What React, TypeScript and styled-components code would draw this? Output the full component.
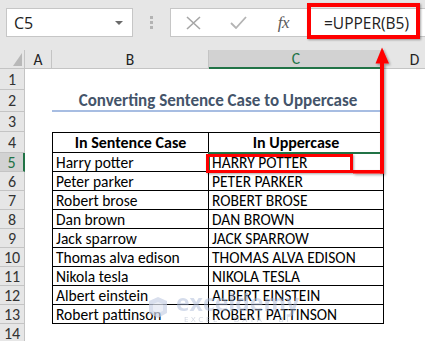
import styled, { createGlobalStyle } from 'styled-components';

const rows = [
  ['Harry potter', 'HARRY POTTER'],
  ['Peter parker', 'PETER PARKER'],
  ['Robert brose', 'ROBERT BROSE'],
  ['Dan brown', 'DAN BROWN'],
  ['Jack sparrow', 'JACK SPARROW'],
  ['Thomas alva edison', 'THOMAS ALVA EDISON'],
  ['Nikola tesla', 'NIKOLA TESLA'],
  ['Albert einstein', 'ALBERT EINSTEIN'],
  ['Robert pattinson', 'ROBERT PATTINSON'],
];

const columns = ['A', 'B', 'C', 'D'];

function App() {
  return (
    <StPage>
      <GlobalStyle />
      <StToolbar>
        <StNameBox>
          <span>C5</span>
          <StDropdown />
        </StNameBox>
        <StDots>
          <i />
          <i />
          <i />
        </StDots>
        <StFormulaBox>
          <StIconSlot>
            <svg width="15" height="14" viewBox="0 0 15 14">
              <path d="M1 1 L14 13 M14 1 L1 13" stroke="#a6a6a6" strokeWidth="1.6" fill="none" />
            </svg>
          </StIconSlot>
          <StIconSlot>
            <svg width="17" height="13" viewBox="0 0 17 13">
              <path d="M1 7 L6 12 L16 1" stroke="#b4b4b4" strokeWidth="1.8" fill="none" />
            </svg>
          </StIconSlot>
          <StIconSlot>
            <StFx>fx</StFx>
          </StIconSlot>
          <StFormula>=UPPER(B5)</StFormula>
        </StFormulaBox>
      </StToolbar>

      <StSheet>
        <StCorner />
        {columns.map((c) => (
          <StColHeader key={c} $selected={c === 'C'}>
            {c}
          </StColHeader>
        ))}

        <StRowHeader>1</StRowHeader>
        <StCell />
        <StCell />
        <StCell />
        <StCell />

        <StRowHeader>2</StRowHeader>
        <StCell />
        <StTitle>Converting Sentence Case to Uppercase</StTitle>
        <StCell />

        <StRowHeader>3</StRowHeader>
        <StCell />
        <StCell />
        <StCell />
        <StCell />

        <StRowHeader>4</StRowHeader>
        <StCell />
        <StTableCell $head $first $top>
          In Sentence Case
        </StTableCell>
        <StTableCell $head $top>
          In Uppercase
        </StTableCell>
        <StCell />

        {rows.map(([a, b], i) => (
          <StRowGroup key={a} row={i + 5} a={a} b={b} />
        ))}

        <StRowHeader>14</StRowHeader>
        <StCell />
        <StCell />
        <StCell />
        <StCell />
      </StSheet>

      <StWatermark>
        <svg width="22" height="22" viewBox="0 0 22 22">
          <path d="M2 4 L11 0 L20 4 L20 16 L11 21 L2 16 Z" fill="#c9d2e6" />
          <path d="M6 7 L11 5 L16 7 L16 14 L11 16 L6 14 Z" fill="#e3e8f3" />
        </svg>
        <div>
          <StMarkName>exceldemy</StMarkName>
          <StMarkSub>EXCEL · DATA · BI</StMarkSub>
        </div>
      </StWatermark>

      <StFormulaHighlight />
      <StCellHighlight />
      <StArrow width="425" height="341" viewBox="0 0 425 341">
        <defs>
          <filter id="sh" x="-20%" y="-20%" width="160%" height="160%">
            <feDropShadow dx="1.5" dy="1.5" stdDeviation="1" floodColor="#000" floodOpacity="0.35" />
          </filter>
        </defs>
        <g filter="url(#sh)" fill="#ff0000">
          <rect x="353" y="170" width="31" height="3.5" />
          <rect x="380" y="62" width="4" height="111.5" />
          <path d="M375.5 63.5 L389 63.5 L382 47.5 Z" />
        </g>
      </StArrow>
    </StPage>
  );
}

function StRowGroup({ row, a, b }: { row: number; a: string; b: string }) {
  return (
    <>
      <StRowHeader $selected={row === 5}>{row}</StRowHeader>
      <StCell />
      <StTableCell $first>{a}</StTableCell>
      <StTableCell $active={row === 5}>{b}</StTableCell>
      <StCell />
    </>
  );
}

export default App;

const GlobalStyle = createGlobalStyle`
  html, body {
    margin: 0;
    padding: 0;
    background: #ffffff;
  }
  body {
    font-family: Carlito, Lato, "Liberation Sans", sans-serif;
    overflow: hidden;
  }
`;

const StPage = styled.div`
  position: relative;
  width: 425px;
  height: 341px;
  overflow: hidden;
  background: #ffffff;
`;

const StToolbar = styled.div`
  display: flex;
  align-items: flex-start;
  height: 50px;
  box-sizing: border-box;
  padding: 8px 0 0 6px;
  background: #e6e6e6;
`;

const StNameBox = styled.div`
  display: flex;
  align-items: center;
  justify-content: space-between;
  width: 127px;
  height: 29px;
  box-sizing: border-box;
  padding: 0 9px 0 7px;
  background: #ffffff;
  border: 1px solid #c6c6c6;
  font-family: 'Open Sans', sans-serif;
  font-size: 16px;
  color: #222222;
`;

const StDropdown = styled.div`
  width: 0;
  height: 0;
  border-left: 4px solid transparent;
  border-right: 4px solid transparent;
  border-top: 4px solid #6a6a6a;
`;

const StDots = styled.div`
  display: flex;
  flex-direction: column;
  align-items: center;
  gap: 2px;
  width: 37px;
  padding-top: 8px;

  i {
    display: block;
    width: 3px;
    height: 3px;
    background: #b3b3b3;
  }
`;

const StFormulaBox = styled.div`
  display: flex;
  align-items: center;
  flex: 1;
  height: 29px;
  box-sizing: border-box;
  background: #ffffff;
  border: 1px solid #c6c6c6;
  border-right: none;
`;

const StIconSlot = styled.div`
  display: flex;
  align-items: center;
  justify-content: center;
  width: 45px;
  height: 100%;
`;

const StFx = styled.span`
  font-family: 'Liberation Serif', serif;
  font-style: italic;
  font-size: 17px;
  color: #5a5a5a;
  letter-spacing: -0.5px;
`;

const StFormula = styled.div`
  padding-left: 18px;
  font-family: 'Open Sans', sans-serif;
  font-size: 15.5px;
  color: #222222;
  white-space: nowrap;
`;

const StSheet = styled.div`
  display: grid;
  grid-template-columns: 25px 27px 157px 175px 62px;
  grid-template-rows: 19px 21px 22px 20px 21px repeat(10, 19px);
  font-size: 15.5px;
`;

const StCorner = styled.div`
  position: relative;
  background: #e6e6e6;
  border-right: 1px solid #c4c4c4;
  border-bottom: 1px solid #c4c4c4;
  box-sizing: border-box;

  &::after {
    content: '';
    position: absolute;
    right: 2px;
    bottom: 2px;
    width: 0;
    height: 0;
    border-left: 9px solid transparent;
    border-bottom: 13px solid #b8b8b8;
  }
`;

const StColHeader = styled.div<{ $selected?: boolean }>`
  display: flex;
  align-items: center;
  justify-content: center;
  box-sizing: border-box;
  background: ${(p) => (p.$selected ? '#d2d2d2' : '#e6e6e6')};
  color: ${(p) => (p.$selected ? '#217346' : '#222222')};
  border-right: 1px solid #c4c4c4;
  border-bottom: ${(p) => (p.$selected ? '2px solid #217346' : '1px solid #c4c4c4')};
`;

const StRowHeader = styled.div<{ $selected?: boolean }>`
  display: flex;
  align-items: center;
  justify-content: center;
  box-sizing: border-box;
  font-size: 16px;
  background: ${(p) => (p.$selected ? '#d2d2d2' : '#e6e6e6')};
  color: ${(p) => (p.$selected ? '#217346' : '#333333')};
  border-bottom: 1px solid #c4c4c4;
  border-right: ${(p) => (p.$selected ? '2px solid #217346' : '1px solid #c4c4c4')};
`;

const StCell = styled.div`
  background: #ffffff;
`;

const StTitle = styled.div`
  grid-column: span 2;
  display: flex;
  align-items: center;
  justify-content: center;
  box-sizing: border-box;
  border-bottom: 2px solid #a7bde2;
  font-weight: bold;
  font-size: 17px;
  color: #44546a;
`;

const StTableCell = styled.div<{ $head?: boolean; $first?: boolean; $top?: boolean; $active?: boolean }>`
  position: relative;
  display: flex;
  align-items: center;
  justify-content: ${(p) => (p.$head ? 'center' : 'flex-start')};
  box-sizing: border-box;
  padding-left: ${(p) => (p.$head ? '0' : '3px')};
  border-right: 1px solid #000000;
  border-bottom: 1px solid #000000;
  border-left: ${(p) => (p.$first ? '1px solid #000000' : 'none')};
  border-top: ${(p) => (p.$top ? '1px solid #000000' : 'none')};
  font-weight: ${(p) => (p.$head ? 'bold' : 'normal')};
  font-size: ${(p) => (p.$head ? '16px' : '15.5px')};
  color: #000000;
  white-space: nowrap;

  ${(p) =>
    p.$active &&
    `
      &::after {
        content: '';
        position: absolute;
        left: -1px;
        top: -1px;
        right: -1px;
        bottom: -1px;
        border: 2px solid #217346;
      }
    `}
`;

const StWatermark = styled.div`
  position: absolute;
  left: 147px;
  top: 291px;
  display: flex;
  align-items: center;
  gap: 7px;
  opacity: 0.7;
  pointer-events: none;
`;

const StMarkName = styled.div`
  font-family: 'Open Sans', sans-serif;
  font-weight: bold;
  font-size: 23px;
  line-height: 22px;
  color: rgba(170, 185, 215, 0.7);
`;

const StMarkSub = styled.div`
  font-family: 'Open Sans', sans-serif;
  font-size: 8px;
  letter-spacing: 2.6px;
  padding-left: 8px;
  color: rgba(170, 180, 200, 0.8);
`;

const StFormulaHighlight = styled.div`
  position: absolute;
  left: 307px;
  top: 3px;
  width: 113px;
  height: 36px;
  box-sizing: border-box;
  border: 4px solid #ff0000;
  box-shadow: 1px 1px 2px rgba(0, 0, 0, 0.35);
`;

const StCellHighlight = styled.div`
  position: absolute;
  left: 206px;
  top: 154px;
  width: 147px;
  height: 19px;
  box-sizing: border-box;
  border: 3px solid #ff0000;
  box-shadow: 1px 1px 2px rgba(0, 0, 0, 0.35);
`;

const StArrow = styled.svg`
  position: absolute;
  left: 0;
  top: 0;
  pointer-events: none;
`;
